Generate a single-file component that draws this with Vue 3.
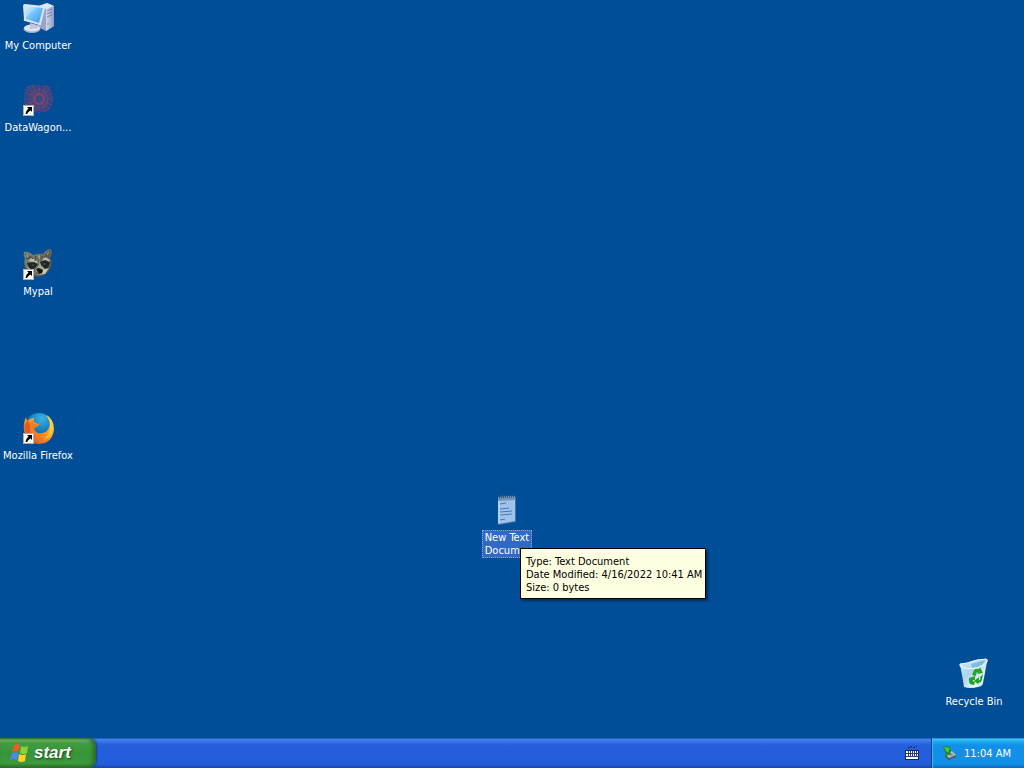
<script setup>
import { ref } from 'vue'

const selected = ref('document')
</script>

<template>
  <main class="screen">
    <section class="desktop" aria-label="Desktop">
      <button class="item computer" type="button" @click="selected = 'computer'">
        <svg class="icon" viewBox="0 0 32 32" aria-hidden="true">
          <defs>
            <linearGradient id="lcd" x1="0" y1="0" x2="1" y2="1">
              <stop offset="0" stop-color="#c0ebff" />
              <stop offset=".45" stop-color="#72c4fb" />
              <stop offset="1" stop-color="#3d91ec" />
            </linearGradient>
            <linearGradient id="tower" x1="0" y1="0" x2="1" y2="0">
              <stop offset="0" stop-color="#d4d9ec" />
              <stop offset="1" stop-color="#8f9ac4" />
            </linearGradient>
          </defs>
          <path d="M17 4 25 1l7 3v20l-8 5-8-4z" fill="#99a4c8" />
          <path d="m24 6 8-2v20l-8 5z" fill="url(#tower)" />
          <path d="m17 4 8-3 7 3-8 3z" fill="#dfe4f3" />
          <path d="m25 9 5-2m-5 5 5-2m-5 5 5-2" stroke="#7783ad" />
          <circle cx="26" cy="22" r="1" fill="#74c776" />
          <ellipse cx="10" cy="27" rx="8.500" ry="4" fill="#a4acca" />
          <ellipse cx="10" cy="26" rx="8" ry="3.500" fill="#dfe3f1" />
          <path d="m8 21 7 2 1 3-8 1z" fill="#bdc5df" />
          <path d="m3 2 19 2q2 0 1 2l-4 16q0 2-2 1L3 19q-2 0-1-2L1 4q0-2 2-2z" fill="#dce4f4" />
          <path d="m3 4 18 2-4 15L4 17z" fill="url(#lcd)" />
          <path d="m3 4 12 1Q9 9 4 16z" fill="#ecfaff" opacity=".3" />
        </svg>
        <span class="label">My Computer</span>
      </button>

      <button class="item datawagon" type="button" @click="selected = 'datawagon'">
        <svg class="icon" viewBox="0 0 32 32" aria-hidden="true">
          <path d="M6 2q7-2 11 2 5-4 10-1 2 6 4 12-2 5-5 10-5 3-9 2-7 3-12-2Q2 19 4 14 3 7 6 2z" fill="#4b477c" opacity=".65" />
          <g fill="none" stroke="#8c4068" stroke-width="1.200" opacity=".85">
            <circle cx="17" cy="15" r="5" stroke="#a3415d" stroke-width="2" />
            <circle cx="17" cy="15" r="9" stroke="#704777" />
            <path d="M6 3q7-4 11 2 5-6 11-1 0 6 3 11-1 5-4 10-6 5-10 0-6 5-12-1Q1 17 3 13q-1-6 3-10z" stroke="#704477" stroke-dasharray="2 1" />
            <path d="M17 1v28M3 15h28M7 5l20 20M27 5 7 25M10 2l14 26M24 2 10 28M4 9l26 12M30 9 4 21" stroke-dasharray="2 1" />
          </g>
          <circle cx="17" cy="15" r="3" fill="#394b83" />
        </svg>
        <svg class="shortcut" viewBox="0 0 11 11" aria-hidden="true"><path d="M0 0h11v11H0z" fill="#fff" /><path d="M.5.5h10v10H.5z" fill="none" stroke="#777" stroke-width=".6" /><path d="M4 2h5v5L7.500 5.500Q5 6.500 4 9H2.500Q2.500 6 5.500 3.500z" /></svg>
        <span class="label">DataWagon...</span>
      </button>

      <button class="item mypal" type="button" @click="selected = 'mypal'">
        <svg class="icon" viewBox="0 0 32 32" aria-hidden="true">
          <defs>
            <linearGradient id="fur" x1="0" y1="0" x2="1" y2="1">
              <stop offset="0" stop-color="#7d897c" />
              <stop offset=".5" stop-color="#6b6959" />
              <stop offset="1" stop-color="#4c4b3e" />
            </linearGradient>
          </defs>
          <path d="M2 4q5-1 9 3 5-2 10-1 3-5 8-5 2 5-1 9 3 5 0 11-3 6-11 8-9-1-13-8Q1 15 3 11 1 7 2 4z" fill="url(#fur)" />
          <path d="m3 5 6 4-4 3zm25-3-5 5 4 3z" fill="#4b5350" />
          <path d="m4 6 3 2-2 2zm23-3-2 3 1 2z" fill="#a2a694" />
          <path d="m6 13 4-3 5 3 1 3-5-2zm13-1 4-3 5 3-1 3-5-2z" fill="#bebca8" />
          <path d="m5 15 7-1 4 2-3 4-5 2zm13-1 5-2 5 2-2 6-5 1-4-4z" fill="#20292a" />
          <path d="m16 8 2-1-1 10-4 5 5 5 6-5-5-5z" fill="#aaa795" />
          <path d="m4 18 6 6 6 3 7-1 4-6-6 2-1 4-5 1-5-5z" fill="#cbc7b2" />
          <path d="m14 21 3-1 4 2-1 3-3 1z" fill="#111716" />
          <circle cx="11" cy="17" r=".7" fill="#79785b" /><circle cx="22" cy="16" r=".7" fill="#79785b" />
          <path d="m14 8-1 5M20 8v4M8 8l3 3M25 7l-3 3" stroke="#414b45" />
        </svg>
        <svg class="shortcut" viewBox="0 0 11 11" aria-hidden="true"><path d="M0 0h11v11H0z" fill="#fff" /><path d="M.5.5h10v10H.5z" fill="none" stroke="#777" stroke-width=".6" /><path d="M4 2h5v5L7.500 5.500Q5 6.500 4 9H2.500Q2.500 6 5.500 3.500z" /></svg>
        <span class="label">Mypal</span>
      </button>

      <button class="item firefox" type="button" @click="selected = 'firefox'">
        <svg class="icon" viewBox="0 0 32 32" aria-hidden="true">
          <defs>
            <radialGradient id="globe" cx=".6" cy=".2" r=".8">
              <stop offset="0" stop-color="#35b6e5" />
              <stop offset=".6" stop-color="#1674b6" />
              <stop offset="1" stop-color="#123e78" />
            </radialGradient>
            <linearGradient id="flame" x1=".9" y1="0" x2=".1" y2="1">
              <stop offset="0" stop-color="#ffe14b" />
              <stop offset=".4" stop-color="#fca329" />
              <stop offset="1" stop-color="#e34b1d" />
            </linearGradient>
          </defs>
          <circle cx="17" cy="15" r="14" fill="url(#globe)" />
          <path d="M23 2q9 5 9 15-1 14-15 15Q3 31 2 18 1 11 4 5l1 4q3-3 7-3-1 3 1 5l4 1q0 2-5 4 0 3 4 5 5 1 9-2 5-6 1-14-1-2-3-3z" fill="url(#flame)" />
          <path d="M3 9q-2 13 8 19-5-8-1-13-3-2-3-6-3 1-4 4z" fill="#e15a20" />
          <path d="m8 12 3-4q0 3 2 4l4 1q-2 3-5 3l1 5 4 2 5-1q-4 4-9 2-6-3-5-12z" fill="#f27c22" />
          <path d="M23 3q7 6 5 15-2 7-7 10 9-3 10-11Q32 7 23 3z" fill="#ffd343" opacity=".8" />
        </svg>
        <svg class="shortcut" viewBox="0 0 11 11" aria-hidden="true"><path d="M0 0h11v11H0z" fill="#fff" /><path d="M.5.5h10v10H.5z" fill="none" stroke="#777" stroke-width=".6" /><path d="M4 2h5v5L7.500 5.500Q5 6.500 4 9H2.500Q2.500 6 5.500 3.500z" /></svg>
        <span class="label">Mozilla Firefox</span>
      </button>

      <button class="item document" :class="{ selected: selected === 'document' }" type="button" aria-describedby="document-info" @click="selected = 'document'">
        <svg class="icon" viewBox="0 0 32 32" aria-hidden="true">
          <path d="m7 4 18-1v25L8 31z" fill="#4173b1" />
          <path d="m7 3 17-1v25L7 30z" fill="#a0c2ec" />
          <path d="m7 3 17-1v4L7 7z" fill="#7793b9" />
          <path d="m8 3 15-1" stroke="#33567f" stroke-width="3" stroke-dasharray="1 1" />
          <path d="m9 10 6-1m-6 6 9-1m-9 4 12-1m-12 4 12-1m-12 6 5-1" stroke="#4678b5" />
          <path d="M8 7v22" stroke="#c5dcf8" />
        </svg>
        <span class="label">New Text<br>Docum...</span>
      </button>

      <button class="item recycle" type="button" @click="selected = 'recycle'">
        <svg class="icon" viewBox="0 0 32 32" aria-hidden="true">
          <defs>
            <linearGradient id="bin" x1="0" y1="0" x2="1" y2="1">
              <stop offset="0" stop-color="#d7f0fb" />
              <stop offset=".4" stop-color="#a9d3ee" />
              <stop offset=".75" stop-color="#e8f9ff" />
              <stop offset="1" stop-color="#92c4df" />
            </linearGradient>
          </defs>
          <path d="m2 6 7-1Q17 1 28 1q2 0 1 3l-4 21q0 3-5 4-8 2-14 0Q4 16 2 7z" fill="url(#bin)" />
          <path d="m4 6 6-1q8-3 17-3-1 5-8 7-9 2-15-3z" fill="#bfe0f3" />
          <path d="m13 6 14-4q-1 5-8 7l-5 1z" fill="#82b9dc" />
          <path d="m2 6 7-1Q20 1 28 1q2 0 1 3-3 4-10 6Q9 12 2 8z" fill="none" stroke="#effaff" />
          <g fill="#26a326">
            <path d="m14 17 2-5q2-2 5-1l1-2 3 6-6 1 1-2q-2 0-2 4z" />
            <path d="m25 16-1 6q-1 3-4 3l1 2-5-4 5-4v3q2 0 1-3z" />
            <path d="m11 20 6-2v4l-2 0q-1 1 2 2l-1 3q-4 0-5-3v-2z" />
          </g>
        </svg>
        <span class="label">Recycle Bin</span>
      </button>

      <div id="document-info" class="tooltip" role="tooltip">
        Type: Text Document<br>Date Modified: 4/16/2022 10:41 AM<br>Size: 0 bytes
      </div>
    </section>

    <footer class="taskbar">
      <button class="start" type="button">
        <svg class="flag" viewBox="0 0 20 20" aria-hidden="true">
          <path d="M4 2q3-2 6 0L8 9Q6 7 2 9z" fill="#ef5a25" />
          <path d="M11 3q3 2 7 0l-1 7q-4 2-7 0z" fill="#8bd13c" />
          <path d="M2 10q4-2 6 0l-1 7q-3-2-7 0z" fill="#4f87ef" />
          <path d="M9 11q4 2 7 0l-1 7q-4 2-7 0z" fill="#ffd12e" />
        </svg>
        <span>start</span>
      </button>
      <button class="keyboard" type="button" aria-label="Input language">
        <svg viewBox="0 0 16 16" aria-hidden="true">
          <path d="M4 4q1-3 4-2t5-1" stroke="#10275f" fill="none" stroke-dasharray="2 1" />
          <path d="M1 5h14v10H1z" fill="#10275f" />
          <path d="M2 6h12v8H2z" fill="#fff" />
          <path d="M2 8.500h12M2 11.500h12M4.500 6v6M6.500 6v6M8.500 6v6M10.500 6v6M12.500 6v6" stroke="#263f7c" />
        </svg>
      </button>
      <div class="tray">
        <button class="hardware" type="button" aria-label="Safely Remove Hardware">
          <svg viewBox="0 0 16 16" aria-hidden="true">
            <path d="m3 9 7-3 4 4v2l-7 3-4-3z" fill="#465b60" />
            <path d="m3 9 7-3 4 4-7 3z" fill="#b4c3c4" />
            <path d="m5 9 4-1 3 2-4 1z" fill="#738b95" />
            <path d="m1 1 7 1 1 3-1 4-4 2-1-4z" fill="#17842f" />
            <path d="m2 2 6 1-2 5-2-2z" fill="#54c33f" />
          </svg>
        </button>
        <time datetime="11:04">11:04 AM</time>
      </div>
    </footer>
  </main>
</template>

<style>
body { margin: 0; }
</style>

<style scoped>
.screen {
  display: flex;
  flex-direction: column;
  min-height: 100vh;
  overflow: hidden;
  background: #004e98;
  color: #fff;
  font: 11px/13px Tahoma, "DejaVu Sans Condensed", sans-serif;
}
button { margin: 0; padding: 0; border: 0; background: none; color: inherit; font: inherit; }
svg { display: block; }
.desktop { position: relative; flex: 1; }
.item {
  position: absolute;
  display: flex;
  flex-direction: column;
  align-items: center;
  width: 76px;
  gap: 4px;
}
.icon { width: 32px; height: 32px; }
.label { padding: 1px 3px; white-space: nowrap; }
.computer { left: 0; top: 2px; }
.datawagon { left: 0; top: 84px; }
.mypal { left: 0; top: 248px; }
.firefox { left: 0; top: 412px; }
.document { left: 469px; top: 494px; }
.recycle { right: 12px; bottom: 29px; }
.shortcut { position: absolute; left: 23px; top: 21px; width: 11px; height: 11px; }
.selected .label { background: #316ac5; outline: 1px dotted #86a9d8; outline-offset: -1px; }
.tooltip {
  position: absolute;
  left: 520px;
  top: 548px;
  padding: 6px 3px 4px 5px;
  border: 1px solid #000;
  background: #ffffe1;
  box-shadow: 2px 2px 2px #002b5a;
  color: #000;
  white-space: nowrap;
}
.taskbar {
  display: flex;
  height: 30px;
  background: linear-gradient(#1f50ba 0, #4689ee 6%, #3575e7 12%, #255fdc 24%, #245ddb 80%, #205bd5 90%, #1841a5 100%);
}
.start {
  display: flex;
  align-items: center;
  gap: 4px;
  width: 96px;
  padding-left: 10px;
  border-radius: 0 8px 8px 0;
  background: linear-gradient(#327a32 0, #70b66f 7%, #419c42 17%, #389438 55%, #3c9b3c 85%, #286b29 100%);
  box-shadow: inset -3px 0 4px #286c29, 1px 0 2px #173f8d;
  font: italic bold 17px/24px "Liberation Sans", sans-serif;
  text-shadow: 1px 1px 2px #174418;
}
.flag { width: 20px; height: 20px; }
.keyboard { align-self: center; margin-left: auto; margin-right: 11px; }
.keyboard svg, .hardware svg { width: 16px; height: 16px; }
.tray {
  display: flex;
  align-items: center;
  justify-content: space-between;
  box-sizing: border-box;
  width: 93px;
  padding: 0 13px 0 10px;
  border-left: 1px solid #103e85;
  background: linear-gradient(#187bc1 0, #36c3f2 5%, #19aaf0 12%, #1290e8 25%, #1190e9 80%, #148bd9 90%, #095bc9 100%);
  box-shadow: inset 1px 0 1px #32c4f3;
}
</style>
